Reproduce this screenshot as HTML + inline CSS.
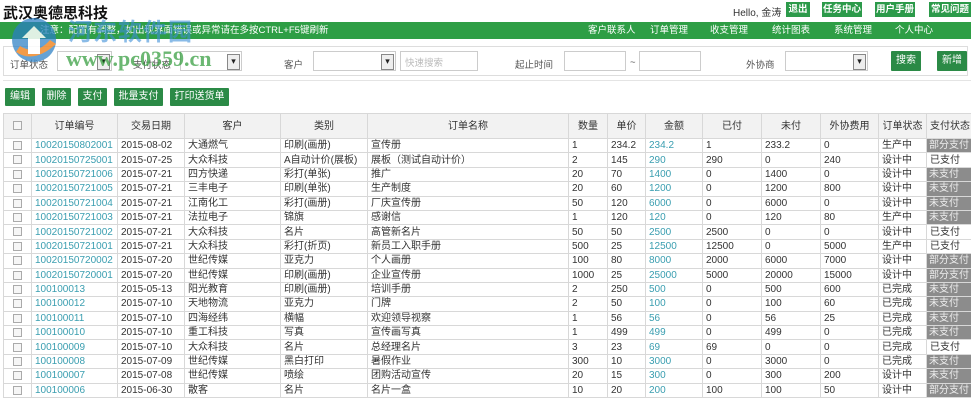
<!DOCTYPE html>
<html><head><meta charset="utf-8"><style>
*{margin:0;padding:0;box-sizing:border-box}
body{width:971px;height:400px;overflow:hidden;background:#fff;font-family:"Liberation Sans","Noto Sans CJK SC",sans-serif;font-size:10px;color:#333;position:relative}
.abs{position:absolute}
.title{left:3px;top:2px;font-size:15px;font-weight:bold;color:#111}
.hello{left:733px;top:4px;font-size:10px;color:#333}
.tb{top:2px;height:15px;background:#2c9a4a;color:#fff;font-size:9.5px;font-weight:bold;line-height:15px;text-align:center}
.green{left:0;top:22px;width:971px;height:17px;background:#2e9e45;color:#fff;font-size:9.5px;line-height:17px}
.filter{left:3px;top:46px;width:965px;height:30px;border:1px solid #ddd;background:#fff}
.lbl{font-size:9.5px;color:#555;top:57px}
.inp{height:20px;border:1px solid #ccc;background:#fff;top:51px}
.sel:after{content:"▾";position:absolute;right:1px;top:2px;width:11px;height:14px;border:1px solid #888;background:#eee;font-size:9px;line-height:13px;text-align:center;color:#222}
.btn{background:#2b8a46;color:#fff;font-size:10px;text-align:center;border-radius:1px}
table{position:absolute;left:3px;top:113px;border-collapse:collapse;table-layout:fixed;width:968px}
td,th{border:1px solid #d8d8d8;height:14.4px;padding:0 3px;font-size:10px;line-height:13px;white-space:nowrap;overflow:hidden;font-weight:normal;text-align:left}
th{height:25px;background:#f2f2f2;text-align:center;color:#333}
td.c,th.c{text-align:center;padding:0}
.cb{display:inline-block;width:9px;height:9px;border:1px solid #aaa;background:#f6f6f6;vertical-align:middle}
.l{color:#3a9eb0}
td.g{background:#8c8c8c;color:#eee;padding:0 2px}
</style></head><body>
<div class="abs title">武汉奥德思科技</div>
<div class="abs hello">Hello, 金涛</div>
<div class="abs tb" style="left:786px;width:24px">退出</div>
<div class="abs tb" style="left:822px;width:40px">任务中心</div>
<div class="abs tb" style="left:875px;width:40px">用户手册</div>
<div class="abs tb" style="left:929px;width:42px">常见问题</div>
<div class="abs green"><span style="position:absolute;left:40px">注意：配置有调整，如出现界面错误或异常请在多按CTRL+F5键刷新</span>
<span style="position:absolute;left:588px">客户联系人</span><span style="position:absolute;left:650px">订单管理</span><span style="position:absolute;left:710px">收支管理</span><span style="position:absolute;left:772px">统计图表</span><span style="position:absolute;left:834px">系统管理</span><span style="position:absolute;left:895px">个人中心</span></div>
<div class="abs filter"></div>
<div class="abs lbl" style="left:10px">订单状态</div>
<div class="abs inp sel" style="left:57px;width:55px"></div>
<div class="abs lbl" style="left:133px">支付状态</div>
<div class="abs inp sel" style="left:180px;width:62px"></div>
<div class="abs lbl" style="left:284px">客户</div>
<div class="abs inp sel" style="left:313px;width:83px"></div>
<div class="abs inp" style="left:400px;width:78px;color:#bbb;font-size:9.5px;padding:3px 4px">快速搜索</div>
<div class="abs lbl" style="left:515px">起止时间</div>
<div class="abs inp" style="left:564px;width:62px"></div>
<div class="abs lbl" style="left:630px">~</div>
<div class="abs inp" style="left:639px;width:62px"></div>
<div class="abs lbl" style="left:746px">外协商</div>
<div class="abs inp sel" style="left:785px;width:83px"></div>
<div class="abs btn" style="left:891px;top:51px;width:30px;height:20px;line-height:20px">搜索</div>
<div class="abs btn" style="left:937px;top:51px;width:30px;height:20px;line-height:20px">新增</div>
<div class="abs" style="left:3px;top:80px;width:968px;border-top:1px solid #e4e4e4"></div>
<div class="abs btn" style="left:5px;top:88px;width:30px;height:18px;line-height:18px">编辑</div>
<div class="abs btn" style="left:42px;top:88px;width:29px;height:18px;line-height:18px">删除</div>
<div class="abs btn" style="left:78px;top:88px;width:29px;height:18px;line-height:18px">支付</div>
<div class="abs btn" style="left:114px;top:88px;width:49px;height:18px;line-height:18px">批量支付</div>
<div class="abs btn" style="left:170px;top:88px;width:59px;height:18px;line-height:18px">打印送货单</div>
<table>
<colgroup><col style="width:28px"><col style="width:86px"><col style="width:67px"><col style="width:96px"><col style="width:87px"><col style="width:201px"><col style="width:39px"><col style="width:38px"><col style="width:57px"><col style="width:59px"><col style="width:59px"><col style="width:58px"><col style="width:48px"><col style="width:45px"></colgroup>
<tr><th class="c"><span class="cb"></span></th><th>订单编号</th><th>交易日期</th><th>客户</th><th>类别</th><th>订单名称</th><th>数量</th><th>单价</th><th>金额</th><th>已付</th><th>未付</th><th>外协费用</th><th>订单状态</th><th>支付状态</th></tr>
<tr><td class="c"><span class="cb"></span></td><td class="l">10020150802001</td><td>2015-08-02</td><td>大通燃气</td><td>印刷(画册)</td><td>宣传册</td><td>1</td><td>234.2</td><td class="l">234.2</td><td>1</td><td>233.2</td><td>0</td><td>生产中</td><td class="g">部分支付</td></tr>
<tr><td class="c"><span class="cb"></span></td><td class="l">10020150725001</td><td>2015-07-25</td><td>大众科技</td><td>A自动计价(展板)</td><td>展板（测试自动计价）</td><td>2</td><td>145</td><td class="l">290</td><td>290</td><td>0</td><td>240</td><td>设计中</td><td>已支付</td></tr>
<tr><td class="c"><span class="cb"></span></td><td class="l">10020150721006</td><td>2015-07-21</td><td>四方快递</td><td>彩打(单张)</td><td>推广</td><td>20</td><td>70</td><td class="l">1400</td><td>0</td><td>1400</td><td>0</td><td>设计中</td><td class="g">未支付</td></tr>
<tr><td class="c"><span class="cb"></span></td><td class="l">10020150721005</td><td>2015-07-21</td><td>三丰电子</td><td>印刷(单张)</td><td>生产制度</td><td>20</td><td>60</td><td class="l">1200</td><td>0</td><td>1200</td><td>800</td><td>设计中</td><td class="g">未支付</td></tr>
<tr><td class="c"><span class="cb"></span></td><td class="l">10020150721004</td><td>2015-07-21</td><td>江南化工</td><td>彩打(画册)</td><td>厂庆宣传册</td><td>50</td><td>120</td><td class="l">6000</td><td>0</td><td>6000</td><td>0</td><td>设计中</td><td class="g">未支付</td></tr>
<tr><td class="c"><span class="cb"></span></td><td class="l">10020150721003</td><td>2015-07-21</td><td>法拉电子</td><td>锦旗</td><td>感谢信</td><td>1</td><td>120</td><td class="l">120</td><td>0</td><td>120</td><td>80</td><td>生产中</td><td class="g">未支付</td></tr>
<tr><td class="c"><span class="cb"></span></td><td class="l">10020150721002</td><td>2015-07-21</td><td>大众科技</td><td>名片</td><td>高管新名片</td><td>50</td><td>50</td><td class="l">2500</td><td>2500</td><td>0</td><td>0</td><td>设计中</td><td>已支付</td></tr>
<tr><td class="c"><span class="cb"></span></td><td class="l">10020150721001</td><td>2015-07-21</td><td>大众科技</td><td>彩打(折页)</td><td>新员工入职手册</td><td>500</td><td>25</td><td class="l">12500</td><td>12500</td><td>0</td><td>5000</td><td>生产中</td><td>已支付</td></tr>
<tr><td class="c"><span class="cb"></span></td><td class="l">10020150720002</td><td>2015-07-20</td><td>世纪传媒</td><td>亚克力</td><td>个人画册</td><td>100</td><td>80</td><td class="l">8000</td><td>2000</td><td>6000</td><td>7000</td><td>设计中</td><td class="g">部分支付</td></tr>
<tr><td class="c"><span class="cb"></span></td><td class="l">10020150720001</td><td>2015-07-20</td><td>世纪传媒</td><td>印刷(画册)</td><td>企业宣传册</td><td>1000</td><td>25</td><td class="l">25000</td><td>5000</td><td>20000</td><td>15000</td><td>设计中</td><td class="g">部分支付</td></tr>
<tr><td class="c"><span class="cb"></span></td><td class="l">100100013</td><td>2015-05-13</td><td>阳光教育</td><td>印刷(画册)</td><td>培训手册</td><td>2</td><td>250</td><td class="l">500</td><td>0</td><td>500</td><td>600</td><td>已完成</td><td class="g">未支付</td></tr>
<tr><td class="c"><span class="cb"></span></td><td class="l">100100012</td><td>2015-07-10</td><td>天地物流</td><td>亚克力</td><td>门牌</td><td>2</td><td>50</td><td class="l">100</td><td>0</td><td>100</td><td>60</td><td>已完成</td><td class="g">未支付</td></tr>
<tr><td class="c"><span class="cb"></span></td><td class="l">100100011</td><td>2015-07-10</td><td>四海经纬</td><td>横幅</td><td>欢迎领导视察</td><td>1</td><td>56</td><td class="l">56</td><td>0</td><td>56</td><td>25</td><td>已完成</td><td class="g">未支付</td></tr>
<tr><td class="c"><span class="cb"></span></td><td class="l">100100010</td><td>2015-07-10</td><td>重工科技</td><td>写真</td><td>宣传画写真</td><td>1</td><td>499</td><td class="l">499</td><td>0</td><td>499</td><td>0</td><td>已完成</td><td class="g">未支付</td></tr>
<tr><td class="c"><span class="cb"></span></td><td class="l">100100009</td><td>2015-07-10</td><td>大众科技</td><td>名片</td><td>总经理名片</td><td>3</td><td>23</td><td class="l">69</td><td>69</td><td>0</td><td>0</td><td>已完成</td><td>已支付</td></tr>
<tr><td class="c"><span class="cb"></span></td><td class="l">100100008</td><td>2015-07-09</td><td>世纪传媒</td><td>黑白打印</td><td>暑假作业</td><td>300</td><td>10</td><td class="l">3000</td><td>0</td><td>3000</td><td>0</td><td>已完成</td><td class="g">未支付</td></tr>
<tr><td class="c"><span class="cb"></span></td><td class="l">100100007</td><td>2015-07-08</td><td>世纪传媒</td><td>喷绘</td><td>团购活动宣传</td><td>20</td><td>15</td><td class="l">300</td><td>0</td><td>300</td><td>200</td><td>设计中</td><td class="g">未支付</td></tr>
<tr><td class="c"><span class="cb"></span></td><td class="l">100100006</td><td>2015-06-30</td><td>散客</td><td>名片</td><td>名片一盒</td><td>10</td><td>20</td><td class="l">200</td><td>100</td><td>100</td><td>50</td><td>设计中</td><td class="g">部分支付</td></tr>
</table>
<svg class="abs" style="left:6px;top:14px;opacity:.85" width="56" height="48" viewBox="0 0 56 48"><path d="M28 4a22 22 0 1 0 0.1 0z" fill="#2a7fc4" opacity=".85"/><path d="M10 38 Q28 50 50 30 L44 26 Q30 42 14 32z" fill="#f08a2a"/><path d="M22 40 V24 L16 24 L28 12 L40 24 L34 24 V40z" fill="#fff"/></svg>
<div class="abs" style="left:68px;top:12px;font-size:24px;font-weight:bold;color:#3d8fd8;opacity:.6;letter-spacing:1px">河东软件园</div>
<div class="abs" style="left:66px;top:46px;font-family:'Liberation Serif',serif;font-size:22px;font-weight:bold;color:#3aa043;opacity:.75">www.pc0359.cn</div>
</body></html>
